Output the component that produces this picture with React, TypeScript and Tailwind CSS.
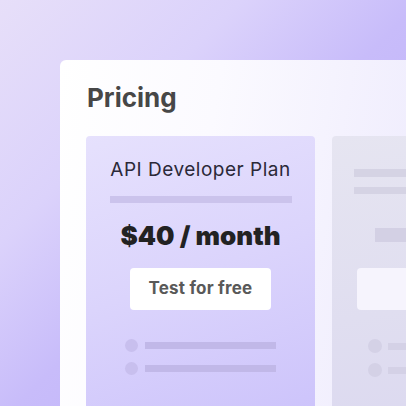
import React from "react";

export default function App() {
  return (
    <div
      className="w-[406px] h-[406px] overflow-hidden flex flex-col pl-[60px] pt-[60px] bg-[linear-gradient(135deg,#e7dff9_0%,#dbd2fb_30%,#c8bcfa_52%,#b9acfc_100%)]"
      style={{ fontFamily: "Inter, 'Noto Sans', sans-serif" }}
    >
      <div className="flex-1 flex flex-col rounded-tl-[6px] pl-[27px] pt-[22px] bg-[linear-gradient(100deg,#ffffff_0%,#fbfaff_40%,#eeebfd_100%)] overflow-hidden">
        <div className="text-[26px] leading-[32px] font-bold text-[#474747] tracking-[0px]">
          Pricing
        </div>
        <div className="flex gap-[17px] mt-[22px] flex-1 -ml-[1px]">
          {/* Main plan card */}
          <div className="w-[229px] shrink-0 rounded-t-[4px] flex flex-col items-center pt-[22px] bg-[linear-gradient(160deg,#e6e1fd_0%,#dbd4fc_50%,#cdc4fb_100%)]">
            <div className="text-[19px] leading-[24px] text-[#2b2938] tracking-[0.5px]">
              API Developer Plan
            </div>
            <div className="w-[182px] h-[7px] mt-[14px] bg-[#cbc3ec]" />
            <div className="text-[26px] leading-[32px] font-black text-[#222222] mt-[17px] tracking-[0px]">
              $40 / month
            </div>
            <div className="w-[141px] h-[42px] mt-[16px] rounded-[4px] bg-white flex items-center justify-center text-[17px] font-bold text-[#595959] tracking-[0.2px]">
              Test for free
            </div>
            <div className="flex flex-col gap-[10px] mt-[29px] w-[151px] self-start ml-[39px]">
              <div className="flex items-center gap-[7px]">
                <div className="w-[13px] h-[13px] rounded-full bg-[#c8bfee]" />
                <div className="w-[131px] h-[7px] bg-[#c1b8e8]" />
              </div>
              <div className="flex items-center gap-[7px]">
                <div className="w-[13px] h-[13px] rounded-full bg-[#c8bfee]" />
                <div className="w-[131px] h-[7px] bg-[#c1b8e8]" />
              </div>
            </div>
          </div>
          {/* Secondary placeholder card */}
          <div className="w-[229px] shrink-0 rounded-t-[4px] flex flex-col pt-[33px] bg-[linear-gradient(170deg,#e6e5f1_0%,#e0def0_60%,#dcd9f0_100%)]">
            <div className="ml-[22px] w-[185px] h-[8px] bg-[#d5d3e4]" />
            <div className="ml-[22px] w-[185px] h-[7px] mt-[10px] bg-[#d5d3e4]" />
            <div className="ml-[43px] w-[143px] h-[14px] mt-[34px] bg-[#d3d0e4]" />
            <div className="ml-[25px] w-[179px] h-[42px] mt-[26px] rounded-[4px] bg-[#f6f4fd]" />
            <div className="flex flex-col gap-[10px] mt-[29px] ml-[36px]">
              <div className="flex items-center gap-[6px]">
                <div className="w-[14px] h-[14px] rounded-full bg-[#d4d1e6]" />
                <div className="w-[131px] h-[7px] bg-[#d4d1e6]" />
              </div>
              <div className="flex items-center gap-[6px]">
                <div className="w-[14px] h-[14px] rounded-full bg-[#d4d1e6]" />
                <div className="w-[131px] h-[7px] bg-[#d4d1e6]" />
              </div>
            </div>
          </div>
        </div>
      </div>
    </div>
  );
}
